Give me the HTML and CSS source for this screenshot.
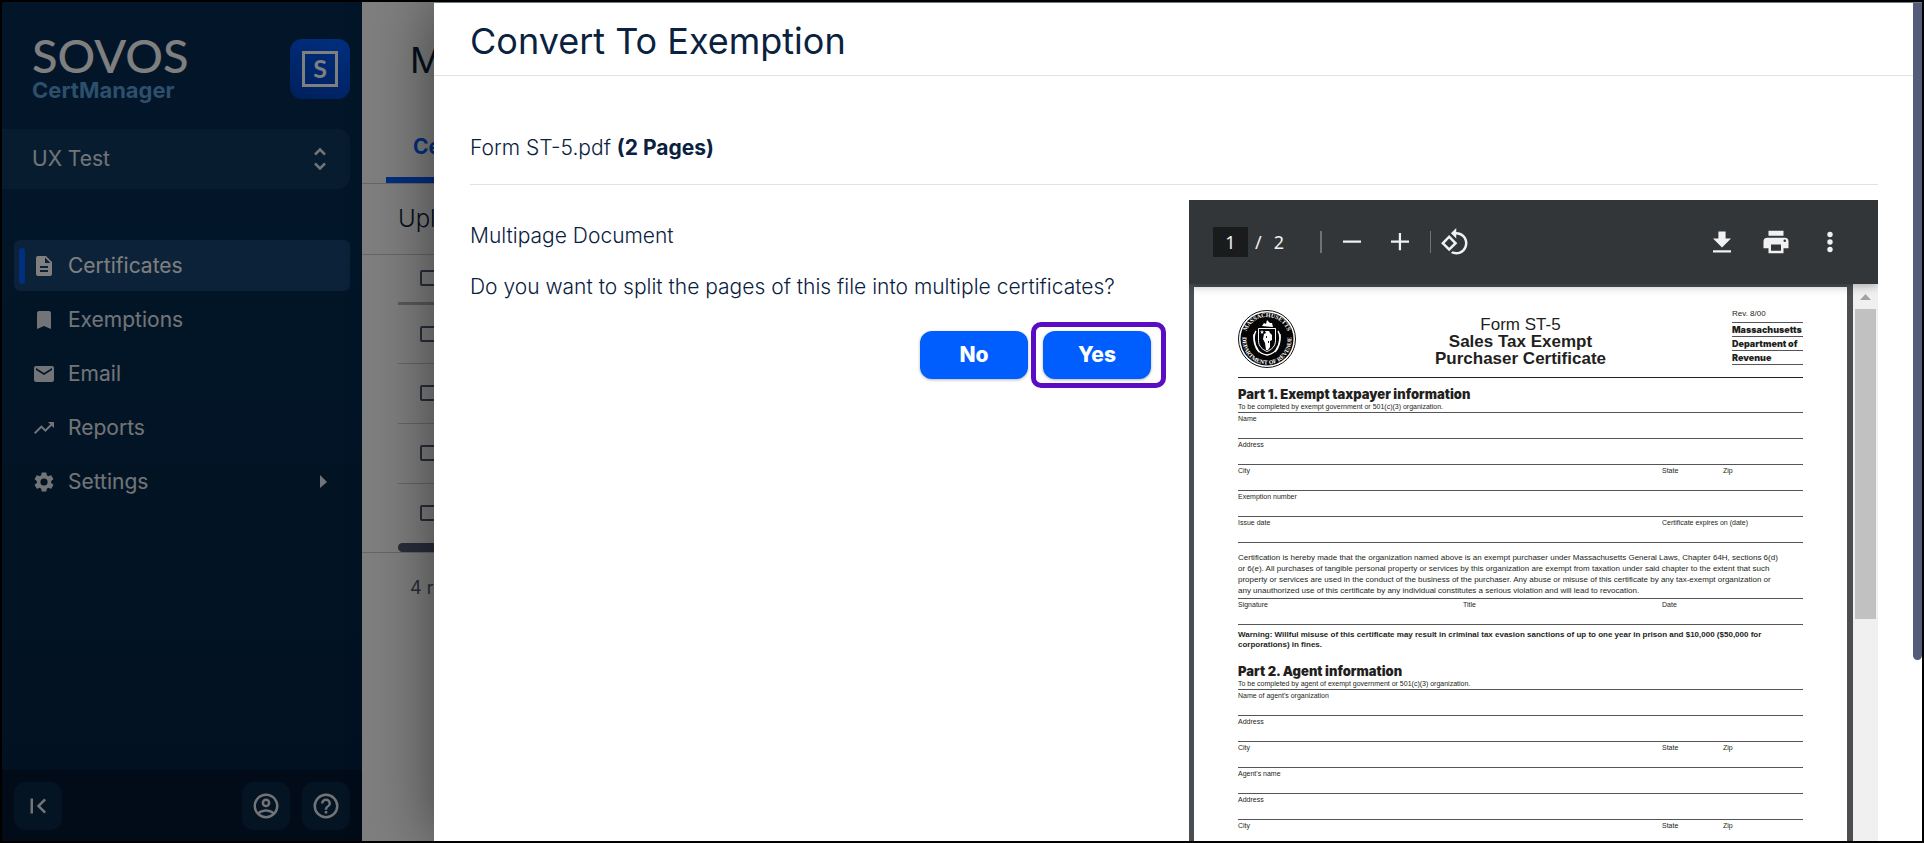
FILE: index.html
```html
<!DOCTYPE html>
<html lang="en">
<head>
  <title>CertManager</title>
  <meta charset="utf-8" />
  <meta name="viewport" content="width=device-width, initial-scale=1.0" />
  <link rel="stylesheet" href="styles.css">
</head>
<body>
<div class="app">

  <aside class="sidebar">
    <header class="sidebar-top">
      <div class="brand">
        <div>
          <div class="logo">SOVOS</div>
          <div class="product">CertManager</div>
        </div>
        <a class="badge" href="#home" aria-label="Home">
          <svg width="36" height="36" viewBox="0 0 36 36"><rect x="1.5" y="1.5" width="33" height="33" fill="none" stroke="#fff" stroke-width="3"/><text x="18" y="27" text-anchor="middle">S</text></svg>
        </a>
      </div>
      <button class="org" type="button">
        UX Test
        <svg width="24" height="24" viewBox="0 0 24 24"><path d="M7 7.500l5-5 5 5M7 16.500l5 5 5-5" fill="none" stroke="currentColor" stroke-width="2.500"/></svg>
      </button>
    </header>

    <nav class="menu">
      <a class="item active" href="#certificates">
        <svg width="24" height="24" viewBox="0 0 24 24"><path d="M14 2H6a2 2 0 0 0-2 2v16c0 1.100.9 2 2 2h12a2 2 0 0 0 2-2V8l-6-6zm2 16H8v-2h8v2zm0-4H8v-2h8v2zm-3-5V3.500L18.500 9H13z"/></svg>
        Certificates
      </a>
      <a class="item" href="#exemptions">
        <svg width="24" height="24" viewBox="0 0 24 24"><path d="M17 3H7a2 2 0 0 0-2 2v16l7-3 7 3V5a2 2 0 0 0-2-2z"/></svg>
        Exemptions
      </a>
      <a class="item" href="#email">
        <svg width="24" height="24" viewBox="0 0 24 24"><path d="M20 4H4a2 2 0 0 0-2 2v12c0 1.100.9 2 2 2h16a2 2 0 0 0 2-2V6a2 2 0 0 0-2-2zm0 4l-8 5-8-5V6l8 5 8-5v2z"/></svg>
        Email
      </a>
      <a class="item" href="#reports">
        <svg width="24" height="24" viewBox="0 0 24 24"><path d="M16 6l2.290 2.290-4.880 4.880-4-4L2 16.590 3.410 18l6-6 4 4 6.300-6.290L22 12V6z"/></svg>
        Reports
      </a>
      <a class="item" href="#settings">
        <svg width="24" height="24" viewBox="0 0 24 24"><path d="M19.140 12.940c.04-.3.06-.61.06-.94s-.02-.64-.07-.94l2.030-1.580a.49.49 0 0 0 .12-.61l-1.920-3.320a.49.49 0 0 0-.59-.22l-2.390.96a7 7 0 0 0-1.620-.94l-.36-2.540a.48.48 0 0 0-.48-.41h-3.840a.47.47 0 0 0-.47.41l-.36 2.540c-.59.24-1.130.57-1.620.94l-2.390-.96a.48.48 0 0 0-.59.22L2.740 8.870a.47.47 0 0 0 .12.61l2.030 1.580a6 6 0 0 0 0 1.880l-2.030 1.580a.49.49 0 0 0-.12.61l1.920 3.320c.12.22.37.29.59.22l2.390-.96c.5.38 1.030.7 1.620.94l.36 2.540c.05.24.24.41.48.41h3.840c.24 0 .44-.17.47-.41l.36-2.540a7 7 0 0 0 1.620-.94l2.390.96c.22.08.47 0 .59-.22l1.920-3.320a.47.47 0 0 0-.12-.61l-2.010-1.580zM12 15.600a3.600 3.600 0 1 1 0-7.200 3.600 3.600 0 0 1 0 7.200z"/></svg>
        Settings
        <svg class="more" width="24" height="24" viewBox="0 0 24 24"><path d="M9 18l7-6-7-7z"/></svg>
      </a>
    </nav>

    <footer class="sidebar-foot">
      <button type="button" aria-label="Collapse menu">
        <svg width="30" height="30" viewBox="0 0 24 24"><path d="M18.410 16.590L13.820 12l4.590-4.590L17 6l-6 6 6 6zM6 6h2v12H6z"/></svg>
      </button>
      <button class="push" type="button" aria-label="Account">
        <svg width="30" height="30" viewBox="0 0 24 24"><path d="M12 2a10 10 0 1 0 0 20 10 10 0 0 0 0-20zM7.070 18.280c.43-.9 3.050-1.780 4.930-1.780s4.510.88 4.930 1.780A7.900 7.900 0 0 1 12 20a7.900 7.900 0 0 1-4.930-1.720zm11.290-1.450c-1.430-1.740-4.900-2.330-6.360-2.330s-4.930.59-6.360 2.330A8 8 0 1 1 20 12a7.900 7.900 0 0 1-1.640 4.830zM12 6a3.500 3.500 0 1 0 0 7 3.500 3.500 0 0 0 0-7zm0 5a1.500 1.500 0 1 1 0-3 1.500 1.500 0 0 1 0 3z"/></svg>
      </button>
      <button type="button" aria-label="Help">
        <svg width="30" height="30" viewBox="0 0 24 24"><path d="M11 18h2v-2h-2v2zm1-16a10 10 0 1 0 0 20 10 10 0 0 0 0-20zm0 18a8 8 0 1 1 0-16 8 8 0 0 1 0 16zm0-14a4 4 0 0 0-4 4h2a2 2 0 1 1 4 0c0 2-3 1.750-3 5h2c0-2.250 3-2.500 3-5a4 4 0 0 0-4-4z"/></svg>
      </button>
    </footer>
  </aside>

  <main class="main">
    <h1>Manage Certificates</h1>
    <div class="tabs"><a href="#tab-certificates">Certificates</a></div>
    <h2>Uploaded</h2>
    <div class="list">
      <table>
        <thead><tr><th><input type="checkbox" aria-label="Select all"></th></tr></thead>
        <tbody>
          <tr><td><input type="checkbox" aria-label="Select row 1"></td></tr>
          <tr><td><input type="checkbox" aria-label="Select row 2"></td></tr>
          <tr><td><input type="checkbox" aria-label="Select row 3"></td></tr>
          <tr><td><input type="checkbox" aria-label="Select row 4"></td></tr>
        </tbody>
      </table>
      <div class="hscroll"></div>
    </div>
    <p class="count">4 records</p>
  </main>

  <div class="backdrop"></div>

  <section class="drawer" role="dialog" aria-labelledby="drawer-title">
    <header class="drawer-head"><h1 id="drawer-title">Convert To Exemption</h1></header>
    <div class="drawer-body">
      <p class="file">Form ST-5.pdf <strong>(2 Pages)</strong></p>
      <div class="columns">
        <div class="question">
          <p>Multipage Document</p>
          <p>Do you want to split the pages of this file into multiple certificates?</p>
          <div class="actions">
            <button type="button">No</button>
            <button class="marked" type="button">Yes</button>
          </div>
        </div>

        <div class="viewer">
          <div class="toolbar">
            <input type="text" value="1" aria-label="Page">
            <span class="slash">/</span>
            <span class="total">2</span>
            <i class="sep"></i>
            <button type="button" aria-label="Zoom out"><svg width="30" height="30" viewBox="0 0 20 20"><path d="M4 9h12v1.500H4z"/></svg></button>
            <button type="button" aria-label="Zoom in"><svg width="30" height="30" viewBox="0 0 20 20"><path d="M4 9h5.200V4h1.500v5H16v1.500h-5.300v5H9.200v-5H4z"/></svg></button>
            <i class="sep thin"></i>
            <button type="button" aria-label="Rotate"><svg width="30" height="30" viewBox="0 0 24 24"><path d="M7.340 6.410L.86 12.900l6.490 6.480 6.490-6.480-6.500-6.490zM3.690 12.900l3.660-3.660L11 12.900l-3.660 3.660-3.650-3.660zm15.670-6.260C17.610 4.880 15.300 4 13 4V.76L8.760 5 13 9.240V6c1.790 0 3.580.68 4.950 2.050 2.730 2.730 2.730 7.170 0 9.900C16.580 19.320 14.790 20 13 20c-.97 0-1.940-.21-2.840-.61l-1.490 1.490C10.020 21.620 11.510 22 13 22c2.300 0 4.610-.88 6.360-2.640 3.520-3.510 3.520-9.210 0-12.720z"/></svg></button>
            <button class="push" type="button" aria-label="Download"><svg width="30" height="30" viewBox="0 0 20 20"><path d="M16 7.600h-3.600V3H7.600v4.600H4l6 6zM4 15.500V17h12v-1.500z"/></svg></button>
            <button type="button" aria-label="Print"><svg width="30" height="30" viewBox="0 0 24 24"><path d="M19 8.500H5a3 3 0 0 0-3 3V17h4v4h12v-4h4v-5.500a3 3 0 0 0-3-3zM16 19H8v-5h8v5zm3-7a1 1 0 1 1 0-2 1 1 0 0 1 0 2zM18 3H6v4h12V3z"/></svg></button>
            <button type="button" aria-label="More"><svg width="30" height="30" viewBox="0 0 20 20"><circle cx="10" cy="5" r="1.800"/><circle cx="10" cy="10" r="1.800"/><circle cx="10" cy="15" r="1.800"/></svg></button>
          </div>

          <div class="pages">
            <article class="page">
              <header class="form-head">
                <svg class="seal" width="58" height="58" viewBox="0 0 58 58">
                  <circle cx="29" cy="29" r="28.500" fill="#fff" stroke="#111" stroke-width="1"/>
                  <circle cx="29" cy="29" r="26.500" fill="#050505"/>
                  <defs>
                    <path id="arc-top" d="M8.500 21A22 22 0 0 1 49.500 21"/>
                    <path id="arc-bottom" d="M5.500 23A24.500 24.500 0 1 0 52.500 23"/>
                  </defs>
                  <text><textPath href="#arc-top" startOffset="50%" text-anchor="middle">MASSACHUSETTS</textPath></text>
                  <text><textPath href="#arc-bottom" startOffset="50%" text-anchor="middle">DEPARTMENT OF REVENUE</textPath></text>
                  <path d="M24 16l2-3 2 1 1-4 3 3 2 0 1 4z" fill="#fff"/>
                  <path d="M20.500 18.500h17v12c0 6-4 9-8.500 11-4.500-2-8.500-5-8.500-11z" fill="#050505" stroke="#fff" stroke-width="1"/>
                  <path d="M18 21c-3 4-2 14 2 19 2 3 6 4.500 9 5 3-.5 7-2 9-5 4-5 5-15 2-19M16 24c-1 6 1 14 5 18M42 24c1 6-1 14-5 18" fill="none" stroke="#fff" stroke-width="1.300"/>
                  <path d="M27 21h4l1 2 2 2v5l-2 1v6l-2 3h-2l-1-7-2-4 1-5 2-1z" fill="#fff"/>
                  <path d="M24 20l.6 1.500H26l-1.200 1 .5 1.500-1.300-1-1.300 1 .5-1.500-1.200-1h1.400z" fill="#fff"/>
                  <path d="M28 26h1v2h-1zM30 31h1v2h-1z"/>
                </svg>
                <h2><span>Form ST-5</span><br>Sales Tax Exempt<br>Purchaser Certificate</h2>
                <div class="agency">
                  <span>Rev. 8/00</span>
                  <b>Massachusetts</b>
                  <b>Department of</b>
                  <b>Revenue</b>
                </div>
              </header>

              <h3>Part 1. Exempt taxpayer information</h3>
              <p class="note">To be completed by exempt government or 501(c)(3) organization.</p>
              <div class="line"><span>Name</span></div>
              <div class="line"><span>Address</span></div>
              <div class="line"><span>City</span><span class="state">State</span><span class="zip">Zip</span></div>
              <div class="line"><span>Exemption number</span></div>
              <div class="line"><span>Issue date</span><span class="state">Certificate expires on (date)</span></div>
              <p class="legal">Certification is hereby made that the organization named above is an exempt purchaser under Massachusetts General Laws, Chapter 64H, sections 6(d)<br>or 6(e). All purchases of tangible personal property or services by this organization are exempt from taxation under said chapter to the extent that such<br>property or services are used in the conduct of the business of the purchaser. Any abuse or misuse of this certificate by any tax-exempt organization or<br>any unauthorized use of this certificate by any individual constitutes a serious violation and will lead to revocation.</p>
              <div class="line"><span>Signature</span><span class="title">Title</span><span class="state">Date</span></div>
              <p class="warning">Warning: Willful misuse of this certificate may result in criminal tax evasion sanctions of up to one year in prison and $10,000 ($50,000 for<br>corporations) in fines.</p>

              <h3>Part 2. Agent information</h3>
              <p class="note">To be completed by agent of exempt government or 501(c)(3) organization.</p>
              <div class="line"><span>Name of agent's organization</span></div>
              <div class="line"><span>Address</span></div>
              <div class="line"><span>City</span><span class="state">State</span><span class="zip">Zip</span></div>
              <div class="line"><span>Agent's name</span></div>
              <div class="line"><span>Address</span></div>
              <div class="line"><span>City</span><span class="state">State</span><span class="zip">Zip</span></div>
            </article>
            <div class="vscroll">
              <svg width="25" height="25" viewBox="0 0 25 25"><path d="M7 16l5.500-6 5.500 6z" fill="#a3a3a3"/></svg>
              <div class="thumb"></div>
            </div>
          </div>
        </div>
      </div>
    </div>
    <div class="drawer-scroll"></div>
  </section>

</div>
</body>
</html>
```
FILE: styles.css
```css
* {
  box-sizing: border-box;
}

body {
  margin: 0;
  font-family: Inter, "Liberation Sans", sans-serif;
  font-size: 21px;
  line-height: 24px;
  color: #0a2240;
  background: #000;
}

h1, h2, h3, p {
  margin: 0;
}

h1 {
  font-size: 36px;
  line-height: 44px;
  font-weight: 400;
}

button {
  font: inherit;
  color: inherit;
  border: 0;
  padding: 0;
  cursor: pointer;
}

a {
  color: inherit;
  text-decoration: none;
}

svg {
  display: block;
  fill: currentColor;
}

.push {
  margin-left: auto;
}

.app {
  position: relative;
  display: flex;
  height: 100vh;
  border: 2px solid #000;
  overflow: hidden;
}

/* sidebar */

.sidebar {
  display: flex;
  flex-direction: column;
  flex: 0 0 360px;
  color: #e4e8ee;
  background: linear-gradient(#04305a, #042848 60%, #042244);
}

.sidebar-top {
  padding: 37px 12px 23px 0;
  background: #042a52;
}

.brand {
  display: flex;
  justify-content: space-between;
  height: 90px;
  padding-left: 30px;
}

.logo {
  font-family: Lato, sans-serif;
  font-size: 47px;
  font-weight: 500;
  line-height: 32px;
  color: #fff;
}

.product {
  margin-top: 7px;
  font-size: 22px;
  font-weight: 700;
  color: #5a9ed6;
}

.badge {
  display: flex;
  align-items: center;
  justify-content: center;
  width: 60px;
  height: 60px;
  border-radius: 12px;
  background: linear-gradient(20deg, #0040b8, #005eff);
}

.badge text {
  font: 700 25px Lato, sans-serif;
  fill: #fff;
}

.org {
  display: flex;
  align-items: center;
  justify-content: space-between;
  width: 100%;
  height: 60px;
  padding: 0 18px 0 30px;
  border-radius: 0 12px 12px 0;
  background: #0e385e;
}

.menu {
  display: flex;
  flex: 1;
  flex-direction: column;
  gap: 3px;
  padding: 28px 12px;
}

.item {
  display: flex;
  align-items: center;
  gap: 12px;
  height: 51px;
  padding: 0 15px 0 18px;
  border-radius: 6px;
}

.item.active {
  padding-left: 5px;
  color: #fff;
  background: #184470;
}

.item.active::before {
  content: "";
  width: 6px;
  height: 36px;
  margin-right: -5px;
  border-radius: 3px;
  background: #005eff;
}

.more {
  margin-left: auto;
}

.sidebar-foot {
  display: flex;
  gap: 12px;
  height: 71px;
  padding: 12px;
  background: #021830;
}

.sidebar-foot button {
  display: flex;
  align-items: center;
  justify-content: center;
  width: 48px;
  height: 48px;
  border-radius: 12px;
  background: #0a2844;
}

/* list page behind the drawer */

.main {
  flex: 1;
  background: #fff;
}

.main h1 {
  padding: 36px 48px 0;
}

.tabs {
  display: flex;
  height: 102px;
  padding-left: 24px;
  border-bottom: 1px solid #ccc;
}

.tabs a {
  align-self: flex-end;
  height: 50px;
  padding: 2px 27px 0;
  font-weight: 700;
  color: #005eff;
  border-bottom: 6px solid #005eff;
}

.main h2 {
  height: 71px;
  padding: 23px 36px 0;
  font-size: 24px;
  font-weight: 300;
  border-bottom: 1px solid #ccc;
}

.list {
  padding-left: 36px;
  border-bottom: 1px solid #ccc;
}

.list table {
  width: 100%;
  border-collapse: collapse;
}

.list th, .list td {
  height: 60px;
  padding: 0 22px;
  text-align: left;
  border-bottom: 1px solid #ccc;
}

.list th {
  height: 48px;
  border-bottom: 3px solid #b4b4b4;
}

.list tr:last-child td {
  border: 0;
}

.list input {
  display: block;
  width: 16px;
  height: 16px;
  margin: 0;
  appearance: none;
  border: 2px solid #535c78;
  border-radius: 2px;
}

.hscroll {
  height: 9px;
  border-radius: 5px;
  background: #535c78;
}

.count {
  padding: 23px 48px;
  font-size: 18px;
  color: #535c78;
}

.backdrop {
  position: absolute;
  inset: 0;
  background: rgba(0, 0, 0, 0.5);
}

/* drawer */

.drawer {
  position: absolute;
  inset: 0 0 0 432px;
  display: flex;
  flex-direction: column;
  background: #fff;
  border-top: 1px solid #6f7d86;
  box-shadow: 0 0 60px rgba(0, 0, 0, 0.5);
}

.drawer-head {
  padding: 16px 36px 12px;
  border-bottom: 1px solid #e2e2e2;
}

.drawer-body {
  display: flex;
  flex: 1;
  flex-direction: column;
  min-height: 0;
  padding: 0 44px 0 36px;
  font-weight: 300;
}

.file {
  padding: 60px 0 24px;
  border-bottom: 1px solid #e2e2e2;
}

.file strong {
  font-weight: 700;
}

.columns {
  display: grid;
  flex: 1;
  grid-template-columns: 1fr 689px;
  gap: 38px;
  min-height: 0;
  padding-top: 15px;
}

.question {
  display: flex;
  flex-direction: column;
  gap: 27px;
  padding-top: 24px;
}

.actions {
  display: flex;
  gap: 15px;
  justify-content: flex-end;
  padding-top: 5px;
}

.actions button {
  width: 108px;
  height: 48px;
  font-weight: 800;
  color: #fff;
  background: #005eff;
  border-radius: 12px;
  box-shadow: 0 1px 3px rgba(0, 0, 0, 0.3);
}

.marked {
  position: relative;
}

.marked::after {
  content: "";
  position: absolute;
  inset: -9px -15px -9px -12px;
  border: 5px solid #5b0dc4;
  border-radius: 10px;
}

.drawer-scroll {
  position: absolute;
  top: 0;
  right: 0;
  width: 9px;
  height: 657px;
  border-radius: 0 0 5px 5px;
  background: #535c78;
}

/* pdf viewer */

.viewer {
  display: flex;
  flex-direction: column;
  min-height: 0;
  overflow: hidden;
  font-weight: 400;
  background: #4a4e51;
}

.toolbar {
  position: relative;
  display: flex;
  flex: none;
  align-items: center;
  height: 84px;
  padding: 0 33px 0 24px;
  font-family: "Noto Sans", sans-serif;
  font-size: 18px;
  color: #f1f1f1;
  background: #323639;
  box-shadow: 0 2px 9px rgba(0, 0, 0, 0.3);
}

.toolbar input {
  width: 35px;
  height: 30px;
  padding: 0;
  font: inherit;
  color: inherit;
  text-align: center;
  background: #191b1c;
  border: 0;
}

.toolbar button {
  width: 30px;
  height: 30px;
  margin-right: 18px;
  background: none;
}

.toolbar button:last-child {
  margin-right: 0;
}

.toolbar .push + button {
  margin: 0 24px 0 6px;
}

.slash {
  margin-left: 7px;
}

.total {
  margin: 0 36px 0 12px;
}

.sep {
  width: 2px;
  height: 22px;
  margin-right: 15px;
  background: #707375;
}

.sep.thin {
  width: 1px;
  margin: 0 9px 0 -3px;
}

.pages {
  display: flex;
  flex: 1;
  gap: 6px;
  min-height: 0;
  padding-left: 5px;
}

.page {
  flex: 1;
  margin-top: 3px;
  padding: 23px 44px 0;
  font-family: "Liberation Sans", sans-serif;
  font-size: 8px;
  line-height: 11px;
  color: #231f20;
  background: #fff;
}

.form-head {
  display: grid;
  grid-template-columns: 71px 1fr 71px;
  height: 68px;
  border-bottom: 1px solid #231f20;
}

.seal text {
  font: 700 6px "Liberation Serif", serif;
  fill: #fff;
}

.form-head h2 {
  padding-top: 6px;
  font-size: 17px;
  line-height: 17px;
  text-align: center;
}

.form-head h2 span {
  font-weight: 400;
}

.agency span, .agency b {
  display: block;
  height: 14px;
  border-bottom: 1px solid #555;
}

.agency span {
  height: 13px;
  line-height: 8px;
}

.agency b, .page h3 {
  font-family: Inter, sans-serif;
  font-size: 9px;
  font-weight: 900;
}

.agency b {
  line-height: 14px;
}

.page h3 {
  padding-top: 9px;
  font-size: 13px;
  line-height: 14px;
}

.note {
  font-size: 7px;
}

.line {
  display: grid;
  grid-template-columns: 225px 199px 61px 1fr;
  height: 26px;
  font-size: 7px;
  border-top: 1px solid #555;
}

.title {
  grid-column: 2;
}

.state {
  grid-column: 3;
  white-space: nowrap;
}

.zip {
  grid-column: 4;
}

.legal {
  padding: 9px 0 2px;
  border-top: 1px solid #555;
  white-space: nowrap;
}

.warning {
  padding: 5px 0;
  font-weight: 700;
  line-height: 10px;
  border-top: 1px solid #555;
  white-space: nowrap;
}

.vscroll {
  width: 25px;
  background: #f0f0f0;
}

.thumb {
  height: 310px;
  margin: 0 2px;
  background: #c1c1c1;
}
```
